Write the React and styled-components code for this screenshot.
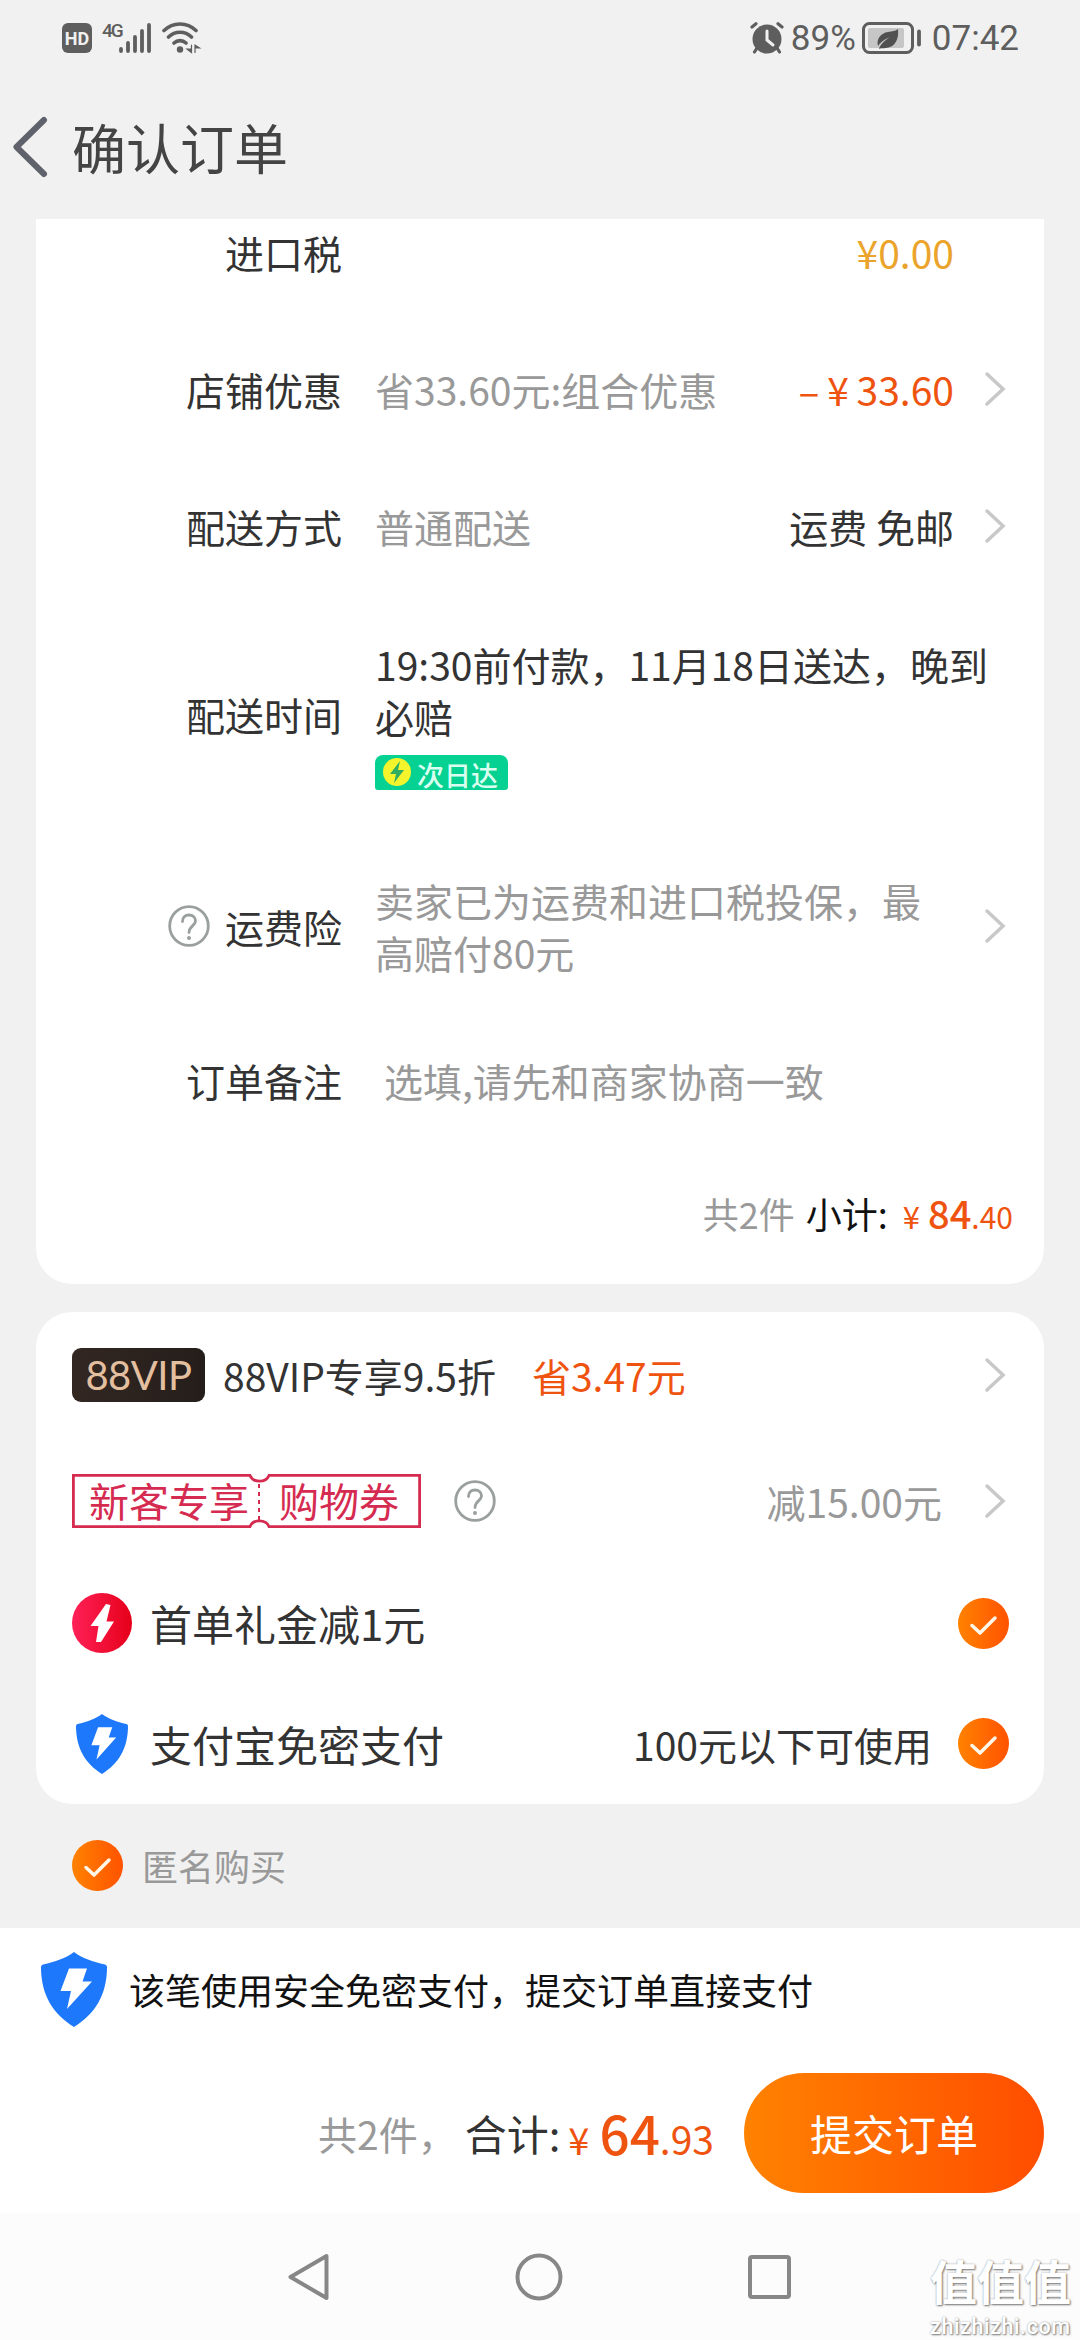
import React, { Component } from "react";
import styled, { createGlobalStyle } from "styled-components";

const GlobalStyle = createGlobalStyle`
  * {
    box-sizing: border-box;
  }
  body {
    margin: 0;
    background: #f1f1f1;
    font-family: "Noto Sans CJK SC", "Noto Sans", sans-serif;
    color: #333;
  }
  svg {
    display: block;
    flex: none;
  }
`;

const Page = styled.div`
  width: 1080px;
  height: 2340px;
  display: flex;
  flex-direction: column;
  position: relative;
  overflow: hidden;
  background: #f1f1f1;
`;

const StatusBar = styled.div`
  height: 75px;
  padding: 0 61px 0 62px;
  display: flex;
  align-items: center;
  justify-content: space-between;
  color: #5e5e5e;
`;

const StatusGroup = styled.div`
  display: flex;
  align-items: center;
`;

const StatusIcon = styled.div`
  margin-left: ${(props) => props.$left || 0}px;
`;

const StatusText = styled.span`
  font-family: Roboto, sans-serif;
  font-size: 35px;
  line-height: 40px;
  padding-top: 3px;
  margin-left: ${(props) => props.$left}px;
`;

const HdBadge = styled.div`
  width: 30px;
  height: 30px;
  border-radius: 6px;
  background: #5e5e5e;
  color: #f1f1f1;
  font: bold 18px/31px Roboto, sans-serif;
  text-align: center;
`;

const NetworkType = styled.span`
  align-self: flex-start;
  width: 17px;
  margin-left: 10px;
  font: 500 19px/17px Roboto, sans-serif;
  letter-spacing: -2px;
`;

const Header = styled.div`
  height: 144px;
  padding-left: 12px;
  display: flex;
  align-items: center;
`;

const Title = styled.h1`
  margin: 0 0 0 24px;
  font-size: 54px;
  line-height: 60px;
  font-weight: 400;
  color: #444;
`;

const Card = styled.div`
  margin: 0 36px ${(props) => props.$gap || 0}px;
  background: #fff;
  border-radius: ${(props) => (props.$cut ? "0 0 36px 36px" : "36px")};
`;

const InfoRow = styled.div`
  height: ${(props) => props.$height}px;
  padding-bottom: ${(props) => props.$bottom || 0}px;
  display: flex;
  align-items: center;
  font-size: 39px;
  line-height: 52px;
`;

const Label = styled.div`
  width: 306px;
  margin-right: 33px;
  display: flex;
  flex: none;
  align-items: center;
  justify-content: flex-end;
  gap: 15px;
`;

const Value = styled.div`
  flex: 1;
  color: ${(props) => (props.$dark ? "#333" : "#999")};
  padding-left: ${(props) => props.$indent || 0}px;
`;

const Extra = styled.div`
  color: ${(props) => props.$color || "#333"};
  margin-right: ${(props) => props.$right || 0}px;
  word-spacing: ${(props) => props.$space || 0}px;
  white-space: pre;
`;

const ArrowSlot = styled.div`
  width: ${(props) => props.$width || 90}px;
  flex: none;
  padding-left: 30px;
`;

const NextDay = styled.div`
  width: 133px;
  height: 35px;
  margin-top: 13px;
  padding-left: 8px;
  display: flex;
  align-items: center;
  gap: 6px;
  border-radius: 8px 8px 3px 3px;
  background: #05d292;
  color: #d9fff0;
  font-size: 27px;
  font-weight: 500;
  line-height: 35px;
`;

const NextDayText = styled.span`
  padding-top: 4px;
`;

const Subtotal = styled.div`
  height: 140px;
  padding: 0 31px 2px 0;
  display: flex;
  align-items: center;
  justify-content: flex-end;
  font-size: 36px;
  line-height: 52px;
  color: #111;
`;

const Muted = styled.span`
  color: #999;
  margin-right: ${(props) => props.$right}px;
`;

const Price = styled.span`
  display: inline-flex;
  align-items: baseline;
  margin-left: ${(props) => props.$left}px;
  padding-top: ${(props) => props.$top}px;
  color: #ef5310;
  font-size: ${(props) => props.$size}px;
  font-weight: 500;
`;

const Small = styled.span`
  font-size: ${(props) => props.$size}px;
  margin-right: ${(props) => props.$right || 0}px;
  font-weight: 400;
`;

const BenefitRow = styled.div`
  height: ${(props) => props.$height}px;
  padding-left: 36px;
  padding-bottom: ${(props) => props.$bottom || 0}px;
  display: flex;
  align-items: center;
  font-size: 39px;
  line-height: 52px;
`;

const Spacer = styled.div`
  flex: 1;
`;

const VipBadge = styled.div`
  width: 133px;
  height: 54px;
  margin-right: 18px;
  border-radius: 9px;
  background: linear-gradient(90deg, #332722, #241e1b);
  color: #e3bfa0;
  font: 400 40px/55px Lato, sans-serif;
  letter-spacing: -0.5px;
  text-align: center;
`;

const Saving = styled.span`
  margin-left: 36px;
  color: #ef5310;
`;

const Coupon = styled.div`
  width: 349px;
  height: 54px;
  margin-right: 33px;
  position: relative;
  display: flex;
  color: #d62b50;
  font-size: 40px;
  line-height: 53px;
`;

const CouponFrame = styled.svg`
  position: absolute;
  left: 0;
  top: 0;
`;

const CouponPart = styled.span`
  padding-left: ${(props) => props.$left}px;
  width: ${(props) => props.$width}px;
  white-space: nowrap;
`;

const BenefitName = styled.span`
  margin-left: ${(props) => props.$left}px;
  font-size: 42px;
`;

const CheckSlot = styled.div`
  margin: 0 35px 0 26px;
`;

const ShieldSlot = styled.div`
  width: 60px;
  display: flex;
  justify-content: center;
`;

const Anonymous = styled.div`
  height: 124px;
  padding: 0 0 2px 72px;
  display: flex;
  align-items: center;
  gap: 19px;
  font-size: 36px;
  color: #999;
`;

const Footer = styled.div`
  background: #fff;
`;

const Notice = styled.div`
  height: 125px;
  padding: 0 0 3px 41px;
  display: flex;
  align-items: center;
  gap: 22px;
  font-size: 36px;
  color: #111;
`;

const PayRow = styled.div`
  height: 160px;
  padding-right: 36px;
  display: flex;
  align-items: center;
  justify-content: flex-end;
  font-size: 39px;
  line-height: 60px;
`;

const TotalLabel = styled.span`
  font-size: 42px;
`;

const SubmitButton = styled.button`
  width: 300px;
  height: 120px;
  margin-left: 30px;
  padding: 0;
  border: 0;
  border-radius: 60px;
  background: linear-gradient(90deg, #ff8200, #ff4d00);
  color: #fff;
  font: inherit;
  font-size: 42px;
`;

const NavBar = styled.div`
  height: 127px;
  padding: 0 289px 0 287px;
  display: flex;
  align-items: center;
  justify-content: space-between;
  background: #fcfcfc;
`;

// sits over the navigation bar
const Watermark = styled.div`
  position: absolute;
  right: 6px;
  bottom: 0;
  width: 144px;
  color: #fff;
  text-shadow: 1px 1px 2px #777, 0 0 2px #aaa;
  white-space: nowrap;
`;

const WatermarkName = styled.div`
  font-size: 47px;
  font-weight: 700;
  line-height: 68px;
`;

const WatermarkUrl = styled.div`
  font: 500 21.500px/26px Roboto, sans-serif;
  letter-spacing: 0.6px;
`;

const Arrow = ({ width }) => (
  <ArrowSlot $width={width}>
    <svg width="22" height="36" viewBox="0 0 22 36" fill="none">
      <path d="M3 3L19 18L3 33" stroke="#c8c8c8" strokeWidth="3.500" strokeLinecap="round" />
    </svg>
  </ArrowSlot>
);

const Help = () => (
  <svg width="42" height="42" viewBox="0 0 42 42" fill="none" stroke="#9aa09d" strokeWidth="2.800">
    <circle cx="21" cy="21" r="19.300" />
    <path d="M14.500 16.500C14.500 12.500 17 10 21 10S27.500 12.500 27.500 16C27.500 20.500 21 21 21 27.500" strokeLinecap="round" />
    <circle cx="21" cy="33" r="2" fill="#9aa09d" stroke="none" />
  </svg>
);

const Check = ({ id }) => (
  <svg width="51" height="51" viewBox="0 0 51 51" fill="none">
    <defs>
      <linearGradient id={id}>
        <stop stopColor="#ff8200" />
        <stop offset="1" stopColor="#ff5200" />
      </linearGradient>
    </defs>
    <circle cx="25.500" cy="25.500" r="25.500" fill={`url(#${id})`} />
    <path d="M14 27.500L22 35L37 20" stroke="#fff8e8" strokeWidth="3.500" strokeLinecap="round" strokeLinejoin="round" />
  </svg>
);

const Shield = ({ width, height }) => (
  <svg width={width} height={height} viewBox="0 0 66 75" preserveAspectRatio="none">
    <path d="M33 0C41 6 52 10 64 12.500Q66 13 66 15C66 43 54 62 33 75C12 62 0 43 0 15Q0 13 2 12.500C14 10 25 6 33 0Z" fill="#1d78fb" />
    <path d="M28 16.500H46L41.500 29.500H51L26 57L30 39H19.500Z" fill="#fff" />
  </svg>
);

const GiftIcon = () => (
  <svg width="60" height="60" viewBox="0 0 60 60">
    <defs>
      <linearGradient id="gift">
        <stop stopColor="#ff2158" />
        <stop offset="1" stopColor="#e50019" />
      </linearGradient>
    </defs>
    <circle cx="30" cy="30" r="30" fill="url(#gift)" />
    <path d="M34 11L18.500 33H26.500L24 49H29L42 28.500H34.500L38.500 12Z" fill="#fff" />
  </svg>
);

const Signal = () => (
  <svg width="32" height="30" viewBox="0 0 32 30" stroke="#5e5e5e" strokeWidth="3.800" strokeLinecap="round">
    <path d="M2 26V28M9 20V28M16 14V28M23 8V28M30 2V28" />
  </svg>
);

const Wifi = () => (
  <svg width="40" height="32" viewBox="0 0 40 32" fill="none" stroke="#5e5e5e" strokeWidth="3.600" strokeLinecap="round">
    <path d="M2 8.500C11 -.2 25 -.2 34 8.500M6.500 15C13 8.600 23 8.600 29.500 15M12 21C15.500 17.800 20.500 17.800 24 21" />
    <circle cx="18" cy="27.500" r="3.200" fill="#5e5e5e" stroke="none" />
    <path d="M29.500 23V30.500L25 27H29.500M33 30.500V23L37.500 26H33" fill="#5e5e5e" strokeWidth="1.200" />
  </svg>
);

const Alarm = () => (
  <svg width="34" height="32" viewBox="0 0 34 32" fill="none" stroke="#5e5e5e" strokeLinecap="round">
    <circle cx="17" cy="17" r="14.500" fill="#5e5e5e" stroke="none" />
    <path d="M2 5L6 1.800M32 5L28 1.800M7 26L4.500 30M27 26L29.500 30" strokeWidth="3.200" />
    <path d="M17 9V18L23 23" stroke="#f1f1f1" strokeWidth="3" />
  </svg>
);

const Battery = () => (
  <svg width="60" height="32" viewBox="0 0 60 32" fill="none">
    <rect x="1.500" y="1.500" width="49" height="29" rx="6" stroke="#5e5e5e" strokeWidth="3" />
    <rect x="6" y="6" width="36" height="20" rx="2" fill="#c6c6c6" />
    <path d="M57 9.500V22.500" stroke="#5e5e5e" strokeWidth="3.800" strokeLinecap="round" />
    <path d="M36 7C37 16 34 25 24 26C21 26.300 18 26 17 27C18 23 22 19 28 15C21 18 18 21 16 24C14 17 19 11 26 10C30 9.500 34 9 36 7Z" fill="#505050" />
  </svg>
);

class App extends Component {
  render() {
    return (
      <Page lang="zh-CN">
        <GlobalStyle />
        <StatusBar>
          <StatusGroup>
            <HdBadge>HD</HdBadge>
            <NetworkType>4G</NetworkType>
            <StatusIcon>
              <Signal />
            </StatusIcon>
            <StatusIcon $left={11}>
              <Wifi />
            </StatusIcon>
          </StatusGroup>
          <StatusGroup>
            <Alarm />
            <StatusText $left={7}>89%</StatusText>
            <StatusIcon $left={6}>
              <Battery />
            </StatusIcon>
            <StatusText $left={10}>07:42</StatusText>
          </StatusGroup>
        </StatusBar>

        <Header>
          <svg width="36" height="62" viewBox="0 0 36 62" fill="none">
            <path d="M32 4L4.500 31L32 58" stroke="#5f616b" strokeWidth="6" strokeLinecap="round" strokeLinejoin="round" />
          </svg>
          <Title>确认订单</Title>
        </Header>

        <Card $cut $gap={28}>
          <InfoRow $height={101} $bottom={35}>
            <Label>进口税</Label>
            <Value />
            <Extra $color="#eba42b">¥0.00</Extra>
            <ArrowSlot />
          </InfoRow>
          <InfoRow $height={137}>
            <Label>店铺优惠</Label>
            <Value>省33.60元:组合优惠</Value>
            <Extra $color="#ef5310" $space={-1}>– ¥ 33.60</Extra>
            <Arrow />
          </InfoRow>
          <InfoRow $height={137}>
            <Label>配送方式</Label>
            <Value>普通配送</Value>
            <Extra>运费 免邮</Extra>
            <Arrow />
          </InfoRow>
          <InfoRow $height={240} $bottom={1}>
            <Label>配送时间</Label>
            <Value $dark>
              19:30前付款，11月18日送达，晚到必赔
              <NextDay>
                <svg width="28" height="28" viewBox="0 0 28 28">
                  <circle cx="14" cy="14" r="14" fill="#f4f42c" />
                  <path d="M17 3L7 16H13L11 25L21 12H15Z" fill="#2fae62" />
                </svg>
                <NextDayText>次日达</NextDayText>
              </NextDay>
            </Value>
            <ArrowSlot $width={40} />
          </InfoRow>
          <InfoRow $height={184}>
            <Label>
              <Help />
              运费险
            </Label>
            <Value>卖家已为运费和进口税投保，最高赔付80元</Value>
            <Arrow />
          </InfoRow>
          <InfoRow $height={126} $bottom={3}>
            <Label>订单备注</Label>
            <Value $indent={9}>选填,请先和商家协商一致</Value>
          </InfoRow>
          <Subtotal>
            <Muted $right={11}>共2件</Muted>
            小计:
            <Price $left={15} $top={2} $size={38}>
              <Small $size={31} $right={8}>¥</Small>
              84
              <Small $size={30}>.40</Small>
            </Price>
          </Subtotal>
        </Card>

        <Card>
          <BenefitRow $height={126}>
            <VipBadge>88VIP</VipBadge>
            88VIP专享9.5折
            <Saving>省3.47元</Saving>
            <Spacer />
            <Arrow />
          </BenefitRow>
          <BenefitRow $height={126}>
            <Coupon>
              <CouponFrame width="349" height="54" viewBox="0 0 349 54" fill="none" stroke="#d62b50" strokeWidth="2.800">
                <path d="M1.400 1.400H178C181 9 194 9 197 1.400H347.600V52.600H197C194 45 181 45 178 52.600H1.400Z" />
                <path d="M187 10V46" strokeWidth="2" strokeDasharray="4 4" />
              </CouponFrame>
              <CouponPart $left={17} $width={207}>新客专享</CouponPart>
              <CouponPart>购物券</CouponPart>
            </Coupon>
            <Help />
            <Spacer />
            <Extra $color="#999" $right={12}>减15.00元</Extra>
            <Arrow />
          </BenefitRow>
          <BenefitRow $height={120} $bottom={2}>
            <GiftIcon />
            <BenefitName $left={18}>首单礼金减1元</BenefitName>
            <Spacer />
            <CheckSlot>
              <Check id="checkGift" />
            </CheckSlot>
          </BenefitRow>
          <BenefitRow $height={120} $bottom={1}>
            <ShieldSlot>
              <Shield width={52} height={60} />
            </ShieldSlot>
            <BenefitName $left={18}>支付宝免密支付</BenefitName>
            <Spacer />
            100元以下可使用
            <CheckSlot>
              <Check id="checkPay" />
            </CheckSlot>
          </BenefitRow>
        </Card>

        <Anonymous>
          <Check id="checkAnon" />
          匿名购买
        </Anonymous>

        <Footer>
          <Notice>
            <Shield width={66} height={75} />
            该笔使用安全免密支付，提交订单直接支付
          </Notice>
          <PayRow>
            <Muted $right={8}>共2件，</Muted>
            <TotalLabel>合计:</TotalLabel>
            <Price $left={8} $top={5} $size={53}>
              <Small $size={38} $right={10}>¥</Small>
              64
              <Small $size={39}>.93</Small>
            </Price>
            <SubmitButton>提交订单</SubmitButton>
          </PayRow>
        </Footer>

        <NavBar>
          <svg width="43" height="48" viewBox="0 0 43 48" fill="none" stroke="#878787" strokeWidth="4" strokeLinejoin="round">
            <path d="M39.500 3L3.500 24L39.500 45Z" />
          </svg>
          <svg width="48" height="48" viewBox="0 0 48 48" fill="none" stroke="#878787" strokeWidth="4">
            <circle cx="24" cy="24" r="21.500" />
          </svg>
          <svg width="43" height="44" viewBox="0 0 43 44" fill="none" stroke="#878787" strokeWidth="4">
            <rect x="2" y="2" width="39" height="40" rx="2" />
          </svg>
        </NavBar>

        <Watermark>
          <WatermarkName>值值值</WatermarkName>
          <WatermarkUrl>zhizhizhi.com</WatermarkUrl>
        </Watermark>
      </Page>
    );
  }
}

export default App;
